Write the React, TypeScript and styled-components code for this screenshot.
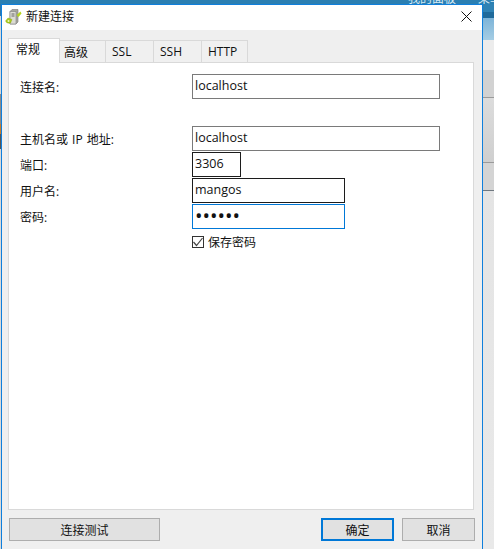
import React from "react";
import styled, { createGlobalStyle } from "styled-components";

const Global = createGlobalStyle`
  html, body { margin: 0; padding: 0; width: 494px; height: 549px; overflow: hidden; background: #e6e6e6; }
  * { box-sizing: border-box; }
  body { font-family: "Open Sans", "Noto Sans CJK SC", sans-serif; font-size: 12px; color: #111; }
`;
const Screen = styled.div`
  width: 494px; height: 549px; display: flex; flex-direction: column; overflow: hidden;
`;
const TopStrip = styled.div`
  height: 4px; flex: none; background: #2b7fb2; overflow: hidden; display: flex; align-items: flex-end;
  color: #d5e9f5; font-family: "Noto Sans CJK SC", sans-serif; font-size: 12px; line-height: 12px;
`;
const TopLabel = styled.span<{ $left: number }>`
  margin-left: ${p => p.$left}px; white-space: nowrap; flex: none;
`;
const Middle = styled.div`
  flex: 1; display: flex; min-height: 0;
`;
const LeftSliver = styled.div`
  width: 1px; flex: none;
  background: linear-gradient(#2a78ad 0 12px, #d9d9d9 12px 90px, #8a8a8a 90px 120px, #c77c2c 120px 130px, #555 130px 145px, #d9d9d9 145px);
`;
const Win = styled.div`
  width: 482px; flex: none; display: flex; flex-direction: column;
  border: 1px solid #0f7fdc; border-bottom: 0; background: #efefef;
`;
const TitleBar = styled.div`
  height: 25px; flex: none; background: #fff; display: flex; align-items: center; padding: 0 10px 4px 3px; gap: 4px;
  & > svg { margin-top: 2px; }
`;
const TitleText = styled.span`
  flex: 1; font-family: "Noto Sans CJK SC", sans-serif; font-size: 12px; color: #111; line-height: 16px;
`;
const Body = styled.div`
  flex: 1; display: flex; flex-direction: column; padding: 8px 8px 7px 6px; min-height: 0;
`;
const TabRow = styled.div`
  display: flex; height: 25px; flex: none; align-items: flex-end; position: relative; z-index: 1; margin-bottom: -1px;
`;
const Tab = styled.div<{ $w: number; $pad: number; $active?: boolean }>`
  width: ${p => p.$w}px; height: ${p => (p.$active ? 25 : 23)}px; flex: none;
  display: flex; align-items: center; padding-left: ${p => p.$pad}px;
  border: 1px solid #d9d9d9; margin-left: ${p => (p.$active ? 0 : -1)}px;
  border-bottom: ${p => (p.$active ? "0" : "1px solid #d9d9d9")};
  background: ${p => (p.$active ? "#fff" : "#f0f0f0")};
  font-size: 12px; color: #111; padding-bottom: ${p => (p.$active ? 4 : 0)}px;
  font-family: "Open Sans", "Noto Sans CJK SC", sans-serif;
`;
const Panel = styled.div`
  height: 448px; flex: none; background: #fff; border: 1px solid #d9d9d9; padding: 11px 0 0 11px;
  display: flex; flex-direction: column;
`;
const Row = styled.div<{ $gap?: number }>`
  display: grid; grid-template-columns: 172px 1fr; align-items: center; height: 25px;
  margin-bottom: ${p => p.$gap ?? 1}px;
`;
const Label = styled.label`
  font-family: "Open Sans", "Noto Sans CJK SC", sans-serif; font-size: 12px; color: #111; line-height: 16px;
  padding-top: 2px; word-spacing: 1px;
`;
const Field = styled.input<{ $w: number; $tone?: "gray" | "dark" | "focus" }>`
  width: ${p => p.$w}px; height: 25px; padding: 0 2px 2px; margin: 0; outline: none; border-radius: 0; background: #fff;
  border: 1px solid ${p => (p.$tone === "focus" ? "#0078d7" : p.$tone === "dark" ? "#1c1c1c" : "#7a7a7a")};
  font-family: "Open Sans", sans-serif; font-size: ${p => (p.$tone === "focus" ? 20 : 12.5)}px; color: #111;
`;
const CheckRow = styled.div`
  display: flex; align-items: center; gap: 4px; margin: 7px 0 0 172px; height: 12px;
`;
const CheckBox = styled.span`
  width: 12px; height: 12px; border: 1px solid #333; background: #fff; display: flex; align-items: center; justify-content: center; flex: none;
`;
const CheckLabel = styled.span`
  font-family: "Noto Sans CJK SC", sans-serif; font-size: 12px; color: #111; line-height: 12px;
`;
const Footer = styled.div`
  flex: none; height: 23px; margin: 8px -1px 0 0; padding-left: 1px; display: flex; align-items: stretch;
`;
const Btn = styled.button<{ $w: number; $primary?: boolean; $ml?: number }>`
  width: ${p => p.$w}px; flex: none; margin: 0 0 0 ${p => p.$ml ?? 0}px; padding: 0; background: #e1e1e1; border-radius: 0;
  border: ${p => (p.$primary ? "2px solid #0078d7" : "1px solid #adadad")};
  font-family: "Noto Sans CJK SC", sans-serif; font-size: 12px; color: #111;
`;
const RightStrip = styled.div`
  flex: 1; display: flex; flex-direction: column;
`;
const StripBand = styled.div<{ $h?: number; $bg: string; $line?: string }>`
  ${p => (p.$h ? `height:${p.$h}px; flex:none;` : "flex:1;")}
  background: ${p => p.$bg};
  ${p => (p.$line ? `border-bottom: 1px solid ${p.$line};` : "")}
`;

const ServerIcon = () => (
  <svg width="17" height="16" viewBox="0 0 17 16">
    <path d="M5 2.5 L7 0.5 H13 V13 L11 15 H5 Z" fill="#a8a8a0" stroke="#777" strokeWidth="0.6" />
    <path d="M5 2.5 H11 V15 H5 Z" fill="#dcdcd4" stroke="#808080" strokeWidth="0.6" />
    <path d="M6.5 5 H9.5 M6.5 7 H9.5" stroke="#666" strokeWidth="1" />
    <path d="M0.5 12 L3 9 L7 10.5 L5.5 14 Q1.5 15 0.5 12 Z" fill="#a9cc1a" stroke="#87a012" strokeWidth="0.4" />
    <path d="M11.5 6 L15.5 2.5 L16.5 4.5 L13.5 8 Z" fill="#b5d420" />
    <circle cx="3.5" cy="12" r="1" fill="#eef6bd" />
  </svg>
);
const CloseIcon = () => (
  <svg width="11" height="11" viewBox="0 0 11 11"><path d="M0.5 0.5 L10.5 10.5 M10.5 0.5 L0.5 10.5" stroke="#111" strokeWidth="1" /></svg>
);
const CheckMark = () => (
  <svg width="10" height="10" viewBox="0 0 10 10"><path d="M0.5 5 L3.5 8.5 L9.5 1" fill="none" stroke="#444" strokeWidth="1.2" /></svg>
);

export default function App() {
  return (
    <Screen>
      <Global />
      <TopStrip>
        <TopLabel $left={408}>我的面板</TopLabel>
        <TopLabel $left={22}>菜单</TopLabel>
      </TopStrip>
      <Middle>
        <LeftSliver />
        <Win>
          <TitleBar>
            <ServerIcon />
            <TitleText>新建连接</TitleText>
            <CloseIcon />
          </TitleBar>
          <Body>
            <TabRow>
              <Tab $w={52} $pad={7} $active>常规</Tab>
              <Tab $w={47} $pad={4}>高级</Tab>
              <Tab $w={49} $pad={6}>SSL</Tab>
              <Tab $w={49} $pad={6}>SSH</Tab>
              <Tab $w={47} $pad={6}>HTTP</Tab>
            </TabRow>
            <Panel>
              <Row $gap={27}>
                <Label>连接名:</Label>
                <Field $w={248} defaultValue="localhost" readOnly />
              </Row>
              <Row>
                <Label>主机名或 IP 地址:</Label>
                <Field $w={248} defaultValue="localhost" readOnly />
              </Row>
              <Row>
                <Label>端口:</Label>
                <Field $w={49} $tone="dark" defaultValue="3306" readOnly />
              </Row>
              <Row>
                <Label>用户名:</Label>
                <Field $w={153} $tone="dark" defaultValue="mangos" readOnly />
              </Row>
              <Row $gap={0}>
                <Label>密码:</Label>
                <Field $w={153} $tone="focus" type="password" defaultValue="123456" readOnly />
              </Row>
              <CheckRow>
                <CheckBox><CheckMark /></CheckBox>
                <CheckLabel>保存密码</CheckLabel>
              </CheckRow>
            </Panel>
            <Footer>
              <Btn $w={151}>连接测试</Btn>
              <Btn $w={73} $ml={161} $primary>确定</Btn>
              <Btn $w={73} $ml={8}>取消</Btn>
            </Footer>
          </Body>
        </Win>
        <RightStrip>
          <StripBand $h={8} $bg="#2f82b4" />
          <StripBand $h={6} $bg="#1f6a9b" />
          <StripBand $h={22} $bg="linear-gradient(#7db4d8,#a5cde4)" />
          <StripBand $h={30} $bg="#ececec" />
          <StripBand $h={28} $bg="#d2d2d2" $line="#9a9a9a" />
          <StripBand $h={65} $bg="linear-gradient(#dcdcdc,#cfcfcf)" $line="#9a9a9a" />
          <StripBand $h={28} $bg="#d4d4d4" $line="#6f7880" />
          <StripBand $bg="linear-gradient(#e4e4e4,#e9e9e9)" />
        </RightStrip>
      </Middle>
    </Screen>
  );
}
